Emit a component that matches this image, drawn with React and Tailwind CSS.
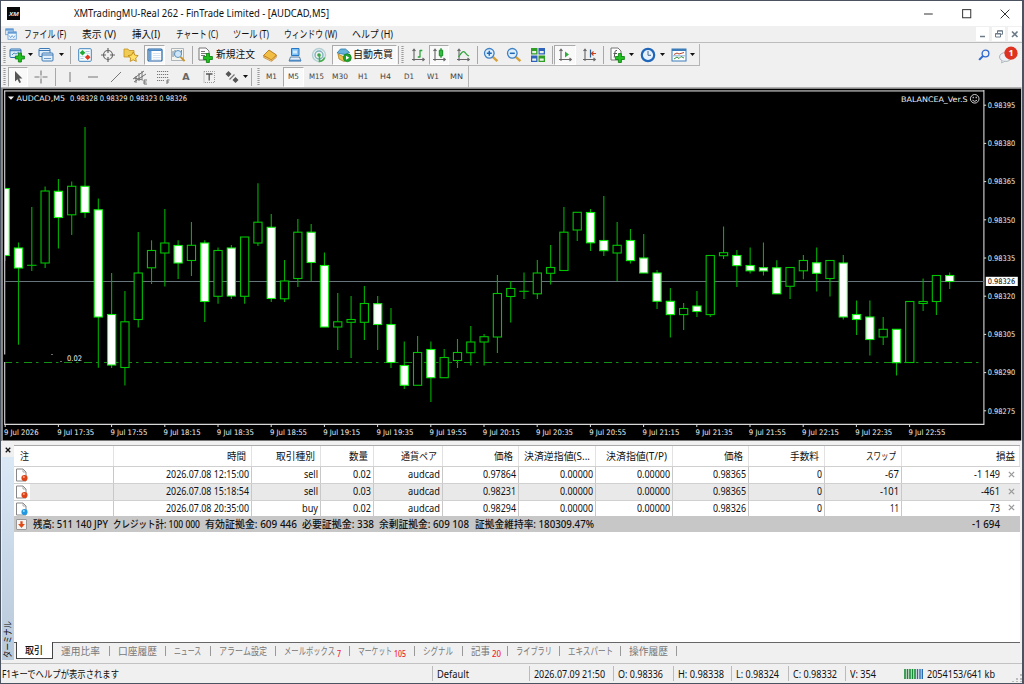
import { useLayoutEffect, useRef, useState } from "react";

const CJK = "font-['Noto_Sans','Noto_Sans_CJK_JP',sans-serif]";

/* Condenses its text horizontally so that it occupies exactly `w` pixels. */
function Fit({ w, className = "", children }) {
  const ref = useRef(null);
  const [scale, setScale] = useState(1);
  useLayoutEffect(() => {
    const natural = parseFloat(getComputedStyle(ref.current).width);
    if (natural > 0) setScale(w / natural);
  }, [w, children]);
  return (
    <span className={`inline-flex shrink-0 ${className}`} style={{ width: w }}>
      <span ref={ref} className="shrink-0 origin-left whitespace-nowrap" style={{ transform: `scaleX(${scale})` }}>
        {children}
      </span>
    </span>
  );
}

/* high, body top, body bottom, low, filled */
const CANDLES = [
  [188.5, 188.5, 255.5, 261, 1], [242.5, 248, 268, 344.7, 1], [207, 265.3, 265.3, 271, 0], [186.5, 191, 263, 268, 0],
  [179, 191.3, 217.5, 248.5, 1], [181.5, 186.3, 214.8, 235, 0], [127, 186.3, 212.5, 217.7, 1], [198.5, 209.8, 317, 367.7, 1],
  [273, 314.5, 365, 368, 1], [291, 321.8, 367.5, 385.5, 0], [232, 273, 319.5, 327.5, 0], [240.3, 250.5, 267.8, 284, 0],
  [209, 243, 253, 286.5, 0], [240.3, 245.5, 263, 279, 1], [222, 245.3, 260.5, 276, 0], [240.3, 243, 301.5, 322, 1],
  [247.5, 250.5, 296.3, 303.7, 0], [245, 248, 296, 299, 1], [237, 237, 296.3, 303.7, 0], [183.3, 222.2, 243, 246, 0],
  [214, 227.3, 298.5, 302, 1], [260, 281, 298.8, 302, 0], [219, 232.2, 278.5, 287, 0], [224, 232.2, 262.5, 281, 1],
  [252.5, 265.5, 327, 327, 1], [293, 321.8, 327, 350, 0], [296, 319.5, 322.3, 358, 0], [286, 303.5, 322.3, 340, 0],
  [296, 303.7, 324.5, 350, 1], [308, 324.5, 362.5, 368, 1], [341.5, 365.5, 385.3, 389, 1], [336, 352.5, 385.3, 385.3, 0],
  [341.5, 349.5, 377.7, 402, 1], [349, 357.5, 377.7, 377.7, 0], [339, 352.5, 360.5, 368, 0], [326, 342, 352.7, 365.5, 0],
  [334, 336.7, 342, 365.5, 0], [275, 293.5, 337, 353, 0], [281, 288.5, 296.5, 322.5, 0], [272.5, 291.3, 291.3, 299, 0],
  [260, 273, 293.8, 299, 0], [245, 267.5, 273.3, 284.5, 0], [207, 232.2, 270.5, 270.5, 0], [212.3, 212.3, 230, 241, 0],
  [209, 212.5, 242.8, 251, 1], [196, 240.5, 250.7, 256, 1], [222, 245.3, 253, 281, 0], [229, 240.5, 260.6, 263.5, 1],
  [234, 258, 273, 273, 1], [270, 273, 301.3, 309, 1], [288, 301.3, 314.6, 337.5, 1], [303, 308.5, 314.6, 330, 0],
  [291, 306, 311.5, 317, 1], [255.5, 255.5, 314.6, 317, 0], [226.5, 252.7, 255.7, 259, 0], [250, 255.5, 265.6, 287, 1],
  [247.5, 265.5, 270.8, 273.5, 1], [242.5, 267.7, 271, 275.5, 1], [260.3, 267.8, 293.8, 293.8, 1], [267.5, 267.5, 286.3, 299, 0],
  [255, 260.5, 270.8, 279.3, 0], [247.5, 262.8, 273.3, 291.5, 1], [260.5, 260.5, 278.5, 296.5, 0], [255, 263, 317, 319.5, 1],
  [300.5, 314.5, 319.5, 335, 1], [300.5, 317, 339.5, 355.5, 1], [317, 329.3, 337, 345, 0], [329.3, 329.3, 362.7, 375.5, 1],
  [301.5, 301.5, 362.5, 362.5, 0], [278.5, 301.5, 303.5, 311, 0], [275.5, 275.5, 301.5, 315, 0], [272.5, 275.5, 281.5, 289, 1],
];
const PRICES = ["0.98395", "0.98380", "0.98365", "0.98350", "0.98335", "0.98320", "0.98305", "0.98290", "0.98275"];
const TIMES = ["2026", "17:35", "17:55", "18:15", "18:35", "18:55", "19:15", "19:35", "19:55", "20:15", "20:35", "20:55", "21:15", "21:35", "21:55", "22:15", "22:35", "22:55"];

function ChartText({ x, y, w, fill = "#f0f0f0", children }) {
  return (
    <text x={x} y={y} textLength={w} lengthAdjust="spacingAndGlyphs" fill={fill} className="font-['DejaVu_Sans_Condensed','DejaVu_Sans',sans-serif] text-[7.6px]">
      {children}
    </text>
  );
}

function Chart() {
  return (
    <svg viewBox="1 87 1021 354" className="block h-[354px] w-[1021px] shrink-0">
      <rect x="1" y="87" width="1021" height="354" fill="#f0f0f0" />
      <rect x="1" y="87.4" width="1020.5" height="1.3" fill="#8a8a8a" />
      <rect x="1" y="88" width="1.2" height="353" fill="#8a8a8a" />
      <rect x="2.6" y="88.8" width="1018.6" height="351.7" fill="#000" />
      <rect x="4" y="90" width="980" height="1.8" fill="#858585" />
      <path d="M4.7 91V354.5M4.7 362V424.4H983.9M983.9 90V425" fill="none" stroke="#d8d8d8" strokeWidth="1.1" />
      <path d="M5 281.5H984" stroke="#66747c" strokeWidth="1" />
      <path d="M5 362.5H984" stroke="#159015" strokeWidth="1" strokeDasharray="8 4 2.5 5.5" strokeDashoffset="1" />
      <clipPath id="plot"><rect x="5" y="92" width="978" height="332" /></clipPath>
      <g clipPath="url(#plot)">
        {CANDLES.map(([h, t, b, l, f], i) => {
          const x = 5.2 + i * 13.303;
          return (
            <g key={i} stroke={f ? "#10f010" : "#00c400"} fill={f ? "#fff" : "#000"} strokeWidth="1.1">
              <path d={`M${x} ${h}V${l}`} stroke="#00b000" />
              {t === b ? <path d={`M${x - 4.7} ${t}h9.4`} /> : <rect x={x - 4.1} y={t} width="8.2" height={b - t} />}
            </g>
          );
        })}
      </g>
      <path d="M8 96.5h6l-3 3.2z" fill="#f2f2f2" />
      <ChartText x="16.5" y="100.6" w="48.5">AUDCAD,M5</ChartText>
      <ChartText x="70" y="100.6" w="117">0.98328 0.98329 0.98323 0.98326</ChartText>
      <ChartText x="901" y="101.6" w="66.5">BALANCEA_Ver.S</ChartText>
      <g fill="none" stroke="#e5e5e5" strokeWidth=".9">
        <circle cx="974.7" cy="98.8" r="4.3" />
        <path d="M972.4 100.2q2.3 2.3 4.6 0" />
        <path d="M973.2 96.7v1.6M976.2 96.7v1.6" strokeWidth="1.1" />
      </g>
      <ChartText x="67" y="360.6" w="15">0.02</ChartText>
      <path d="M51 354.5h2M60 361.5h2" stroke="#999" strokeWidth=".7" />
      {PRICES.map((p, i) => (
        <g key={p}>
          <path d={`M984 ${105.2 + i * 38.2}h2.2`} stroke="#ddd" />
          <ChartText x="987.8" y={108 + i * 38.2} w="27.4">{p}</ChartText>
        </g>
      ))}
      <rect x="985.8" y="276.8" width="32" height="9.2" fill="#fff" />
      <ChartText x="987.8" y="284.2" w="27.4" fill="#000">0.98326</ChartText>
      {TIMES.map((t, i) => (
        <g key={t}>
          <path d={`M${5.2 + i * 53.2} 424.5v2.5`} stroke="#ddd" />
          <ChartText x={4 + i * 53.2} y="434.6" w={i ? 37 : 34.5}>{`9 Jul ${t}`}</ChartText>
        </g>
      ))}
    </svg>
  );
}

/* ---------- toolbar pieces ---------- */
const Icon = ({ children, className = "h-4 w-4" }) => (
  <svg viewBox="0 0 16 16" fill="none" className={`block shrink-0 ${className}`}>{children}</svg>
);
const Cell = ({ className, on, children }) => (
  <div className={`flex h-[20px] shrink-0 items-center justify-center ${on ? "border border-[#aaa] border-r-white border-b-white bg-[#f9f9f9]" : ""} ${className}`}>{children}</div>
);
const Caret = () => <svg viewBox="0 0 5 3" className="h-[3px] w-[5px] shrink-0"><path d="M0 0h5L2.5 3z" fill="#111" /></svg>;
const Sep = ({ className = "w-[9px]" }) => <div className={`flex shrink-0 justify-center ${className}`}><div className="h-[18px] w-px bg-[#a8a8a8]" /></div>;
const Handle = () => (
  <div className="flex w-[7px] shrink-0 justify-center">
    <svg viewBox="0 0 3 18" className="h-[18px] w-[3px]"><path d="M1.5 0V18" stroke="#9a9a9a" strokeWidth="2.2" strokeDasharray="1 1" /></svg>
  </div>
);
const Plus = ({ x = 6, y = 6 }) => <path transform={`translate(${x} ${y})`} d="M3.4.5h3v3h3v3h-3v3h-3v-3h-3v-3h3z" fill="#21c021" stroke="#087a08" strokeWidth=".8" />;
const Axes = () => <path d="M4 2.500v11.500M2 12.500h12M2.500 4L4 2.200 5.500 4M12.500 11l1.800 1.500-1.800 1.500" stroke="#666" strokeWidth="1.100" />;

const NewChart = () => <Icon><rect x="1" y="2" width="11" height="8.5" rx="1" fill="#dcebf8" stroke="#2f73b4" /><path d="M1 3.7h11" stroke="#2f73b4" /><path d="M3 8l2-2 2 1 3-2" stroke="#4e8fca" /><Plus x={6} y={5.5} /></Icon>;
const Profiles = () => <Icon><rect x="1" y="1.5" width="11" height="8" rx="1" fill="#e3effa" stroke="#3d7ab5" /><rect x="4" y="6" width="11" height="8" rx="1" fill="#e3effa" stroke="#3d7ab5" /><path d="M1 3.5h11M4 8h11" stroke="#3d7ab5" /><path d="M6 11.5h7" stroke="#6b9bc8" /></Icon>;
const Market = () => <Icon><rect x="1.7" y="1.7" width="12.6" height="12.6" rx="1" fill="#f8fcff" stroke="#4285bd" /><path d="M3 6.5h10M3 9.5h10" stroke="#bcd4ea" strokeWidth=".6" /><path d="M5.500 3l2.800 2.800-2.800 2.800-2.800-2.800z" fill="#1eab35" /><path d="M10.700 7.400l2.800 2.800-2.800 2.800-2.800-2.800z" fill="#e13a1d" /><path d="M8.500 4.500h4M3.500 11.500h3" stroke="#9bb9d3" strokeWidth=".8" /></Icon>;
const Target = () => <Icon><circle cx="8" cy="8" r="4.5" stroke="#666" strokeWidth="1.2" /><path d="M8 1v5M8 10v5M1 8h5M10 8h5" stroke="#666" strokeWidth="1.2" /></Icon>;
const StarFolder = () => <Icon><path d="M1 2h4l1 1.5h5V10H1z" fill="#f0cb56" stroke="#c39220" strokeWidth=".8" /><path d="M10.2 5l1.6 3.1 3.4.5-2.5 2.4.6 3.4-3.1-1.6-3.1 1.6.6-3.4L5.200 8.600l3.400-.5z" fill="#ffe066" stroke="#b9820e" strokeWidth=".8" /></Icon>;
const Terminal = () => <Icon><rect x="1" y="2" width="14" height="12" rx="1" fill="#fff" stroke="#2461a0" strokeWidth="1.2" /><path d="M1.500 3.200h13" stroke="#3f82c4" strokeWidth="1.500" /><path d="M2 4h2.500v9.500H2z" fill="#6aa2da" /><path d="M6 6.500h7.500M6 8.500h7.500M6 10.500h7.500M6 12.300h7.500" stroke="#c5d8ec" strokeWidth=".7" /></Icon>;
const Tester = () => <Icon><path d="M1.500 1.500h12v12h-12z" fill="#f4f4ee" stroke="#9aa5ad" strokeWidth=".8" /><path d="M3 4v6M5 3v6M11.500 3v5" stroke="#5c6a73" strokeWidth=".8" /><circle cx="8" cy="7" r="3.500" fill="#cfe6f8" stroke="#5d94bf" /><path d="M10.600 9.800l4 4.400" stroke="#c9952c" strokeWidth="2" /></Icon>;
const OrderDoc = () => <Icon><path d="M2 1h7l3 3v9H2z" fill="#fff" stroke="#777" /><path d="M4 4.500h4M4 6.500h6M4 8.500h4" stroke="#777" /><Plus x={6} y={6} /></Icon>;
const Book = () => <Icon><path d="M1.500 8.500L7 3l7.500 5-5 5z" fill="#f2bd43" stroke="#a86a0d" strokeWidth=".8" /><path d="M1.500 8.500v2.200l8 4 5-4.200V8L9.500 13z" fill="#b9700f" /><path d="M2.200 10l7.300 3.800 4.500-4" stroke="#ffe8a8" strokeWidth=".8" /></Icon>;
const Server = () => <Icon><path d="M4.500 1.500h7.500v7H4.500z" fill="#7fc0f5" stroke="#2677c5" /><path d="M6 3.500h4v3H6z" fill="#d3ebff" /><path d="M2 14l1.500-4h9l1.500 4z" fill="#e4edf5" stroke="#5b83a9" /><path d="M2 13.500h12" stroke="#4d89c5" strokeWidth="1.600" /></Icon>;
const Signal = () => <Icon><circle cx="8" cy="8" r="6.500" stroke="#b4d0d4" strokeWidth="1.400" /><circle cx="8" cy="8" r="4" stroke="#7fb2c0" strokeWidth="1.400" /><circle cx="8" cy="8" r="1.800" fill="#37a447" /><path d="M8.500 8v6.500c3-.5 4.500-2 5-4" stroke="#42ad4b" strokeWidth="1.500" /></Icon>;
const Auto = () => <Icon><path d="M1 6l3.500-4h5l4 3.500-4.500 2z" fill="#68b2db" stroke="#277baa" strokeWidth=".8" /><path d="M2 7l6 3 5.500-3v4L8 14.500 3 12z" fill="#edc14b" stroke="#ae811c" strokeWidth=".8" /><circle cx="11.300" cy="10.800" r="4" fill="#1fa32d" stroke="#0c7918" strokeWidth=".6" /><path d="M10 8.800v4l3.300-2z" fill="#fff" /></Icon>;
const BarsI = () => <Icon><Axes /><path d="M10 3v7.500M10 3.500h2.300M7.800 10h2.200" stroke="#2ba43a" strokeWidth="1.300" /></Icon>;
const CandleI = () => <Icon><Axes /><path d="M10 1v10" stroke="#128a20" /><rect x="8.300" y="3" width="3.400" height="6" rx=".6" fill="#33bd3f" stroke="#128a20" /></Icon>;
const LineI = () => <Icon><Axes /><path d="M3.500 10C6 6 8 3.500 9.500 5s2.500 3.500 4.500 4" stroke="#31a33d" strokeWidth="1.200" /></Icon>;
const ZoomI = ({ plus }) => <Icon><path d="M9.800 9.800l4.600 4.400" stroke="#d6a238" strokeWidth="2.500" /><circle cx="6.300" cy="6.300" r="4.800" fill="#dff0fd" stroke="#3d80c4" strokeWidth="1.300" /><path d={plus ? "M3.800 6.300h5M6.300 3.800v5" : "M3.800 6.300h5"} stroke="#1f68b8" strokeWidth="1.500" /></Icon>;
const Tile = () => <Icon><rect x="1" y="1" width="6.500" height="6.500" fill="#2e9e24" /><rect x="8.500" y="1" width="6.500" height="6.500" fill="#2f62bb" /><rect x="1" y="8.500" width="6.500" height="6.500" fill="#2f62bb" /><rect x="8.500" y="8.500" width="6.500" height="6.500" fill="#2e9e24" /><path d="M2.200 4h4v2.200h-4zM9.700 4h4v2.200h-4zM2.200 11.500h4v2.200h-4zM9.700 11.500h4v2.200h-4z" fill="#e9f4e6" /></Icon>;
const ScrollI = () => <Icon><Axes /><path d="M8 4.500v6l4-3z" fill="#2fae3c" /></Icon>;
const ShiftI = () => <Icon><Axes /><path d="M9.500 2.500v8" stroke="#2a5f95" strokeWidth="1.200" /><path d="M15 6.500h-4.500M12.500 4.500l-2 2 2 2" stroke="#c7421c" strokeWidth="1.200" /></Icon>;
const Indic = () => <Icon><path d="M2 1h7l3 3v9H2z" fill="#fff" stroke="#777" /><path d="M8 3.500c-2-.5-2 1-2.200 3l-.6 4M4.500 6.500H8" stroke="#555" /><Plus x={6} y={6} /></Icon>;
const Clock = () => <Icon><circle cx="8" cy="8" r="6.200" fill="#e6f1fd" stroke="#1f65b8" strokeWidth="2.200" /><path d="M8 4v4.300h3" stroke="#466b8f" /></Icon>;
const Template = () => <Icon><rect x="1" y="2" width="14" height="12" fill="#fff" stroke="#3b7bb9" /><path d="M1 3h14" stroke="#3b7bb9" strokeWidth="2" /><path d="M3 7.500l3-1.500 2 1 5-1.500" stroke="#b2422b" /><path d="M3 12l3-2 2 1.500 2-2 3 1.500" stroke="#34943e" /><path d="M2 8.800h12" stroke="#3b7bb9" strokeWidth=".6" /></Icon>;

const Cursor = () => <Icon><path d="M5 2v10.500l2.500-2.300 1.800 3.900 1.700-.8-1.800-3.700h3.200z" fill="#555" /></Icon>;
const Cross = () => <Icon><path d="M8 1.500v5M8 9.500v5M1.500 8h5M9.500 8h5M7.500 8h1" stroke="#777" strokeWidth="1.100" /></Icon>;
const Channel = () => <Icon><path d="M1 10l11-8M2 13L14 5M4 14V7M7 12V4M10 10V2M2 9l9 2" stroke="#666" strokeWidth=".9" /><path d="M15 11h-3v4h3M12 13h2.500" stroke="#555" strokeWidth=".8" /></Icon>;
const Fibo = () => <Icon><path d="M2 2.500h12M2 5.500h12M2 8.500h12M2 11.500h7" stroke="#777" strokeDasharray="1.200 .8" /><path d="M14.500 11H12v4M12 13h2" stroke="#555" strokeWidth=".8" /></Icon>;
const TextBox = () => <Icon><rect x="3" y="2.500" width="10.500" height="11" stroke="#999" strokeDasharray="1 1" /><path d="M5 5h6.500M8.200 5v6.500" stroke="#555" strokeWidth="1.300" /></Icon>;
const Arrows = () => <Icon><path d="M4.500 2l3 3-3 3-3-3zM11.500 8l3 3-3 3-3-3z" fill="#555" /><path d="M5.500 10.500L10.500 5.500" stroke="#777" strokeWidth="1.200" /></Icon>;

function TF({ w, className, on, children }) {
  return <Cell className={className} on={on}><Fit w={w} className="font-['DejaVu_Sans_Condensed'] text-[7.5px] text-[#444]">{children}</Fit></Cell>;
}

const MENUS = [["ファイル (F)", 42, "w-[58px]"], ["表示 (V)", 34, "w-[50px]"], ["挿入(I)", 28, "w-[44px]"], ["チャート (C)", 42, "w-[57px]"], ["ツール (T)", 36, "w-[51px]"], ["ウィンドウ (W)", 53, "w-[68px]"], ["ヘルプ (H)", 41, "w-[50px]"]];

/* ---------- trade table ---------- */
const COLS = "grid grid-cols-[100px_138px_69px_53px_69px_76px_77px_77px_76px_76px_77px_118px]";
const HEADS = [["時間", 19], ["取引種別", 39], ["数量", 19], ["通貨ペア", 36], ["価格", 19], ["決済逆指値(S...", 66], ["決済指値(T/P)", 61], ["価格", 19], ["手数料", 29], ["スワップ", 30], ["損益", 19]];
const ROWS = [
  { buy: false, c: [["2026.07.08 12:15:00", 83], ["sell", 14], ["0.02", 18], ["audcad", 32], ["0.97864", 33], ["0.00000", 33], ["0.00000", 33], ["0.98365", 33], ["0", 5], ["-67", 14], ["-1 149", 26]] },
  { buy: false, c: [["2026.07.08 15:18:54", 83], ["sell", 14], ["0.03", 18], ["audcad", 32], ["0.98231", 33], ["0.00000", 33], ["0.00000", 33], ["0.98365", 33], ["0", 5], ["-101", 19], ["-461", 19]] },
  { buy: true, c: [["2026.07.08 20:35:00", 83], ["buy", 16], ["0.02", 18], ["audcad", 32], ["0.98294", 33], ["0.00000", 33], ["0.00000", 33], ["0.98326", 33], ["0", 5], ["11", 9], ["73", 10]] },
];
const SUMMARY = [["残高: 511 140 JPY", 75, "w-[80px]"], ["クレジット計: 100 000", 87, "w-[92px]"], ["有効証拠金: 609 446", 92, "w-[97px]"], ["必要証拠金: 338", 72, "w-[77px]"], ["余剰証拠金: 609 108", 90, "w-[96px]"], ["証拠金維持率: 180309.47%", 119, "w-[120px]"]];
const TABS = [["運用比率", 39, "w-[48px]"], ["口座履歴", 39, "w-[47px]"], ["ニュース", 27, "w-[35.5px]"], ["アラーム設定", 48, "w-[56px]"], ["メールボックス", 51, "w-[65px]", "7", 4], ["マーケット", 34, "w-[56px]", "105", 12], ["シグナル", 30, "w-[39.5px]"], ["記事", 19, "w-[36px]", "20", 9], ["ライブラリ", 36, "w-[43px]"], ["エキスパート", 45, "w-[52px]"], ["操作履歴", 39, "w-[47px]"]];
const STATUS = [["Default", 32, "w-[97px]"], ["2026.07.09 21:50", 71, "w-[84px]"], ["O: 0.98336", 45, "w-[60px]"], ["H: 0.98338", 46, "w-[58px]"], ["L: 0.98324", 43, "w-[57px]"], ["C: 0.98332", 44, "w-[57px]"], ["V: 354", 26, "w-[55px]"]];

const RowIcon = ({ buy }) => (
  <svg viewBox="0 0 14 14" className="h-[14px] w-[14px]">
    <path d="M1.500 1h6.500l3 3v9H1.500z" fill="#fff" stroke="#888" />
    <path d="M8 1v3h3" fill="none" stroke="#999" strokeWidth=".8" />
    <circle cx="9.500" cy="10" r="3.100" fill={buy ? "#2298e0" : "#dc4319"} />
    <circle cx="8.800" cy="9.100" r="1" fill={buy ? "#9fdcff" : "#ffa98a"} />
  </svg>
);

export default function App() {
  return (
    <div className={`flex h-[684px] w-[1024px] flex-col overflow-hidden border-t border-r-2 border-b border-l border-[#4b5260] bg-[#f0f0f0] text-[10px] leading-none text-[#111] ${CJK}`}>
      {/* title bar */}
      <div className="flex h-[25px] shrink-0 items-center bg-white pl-[6px]">
        <div className="flex h-[13px] w-[13px] shrink-0 items-center justify-center bg-[#080808]">
          <Fit w={10} className="text-[6px] font-bold text-[#ddd] italic">XM</Fit>
        </div>
        <Fit w={255} className="ml-[54px] text-[10.5px]">XMTradingMU-Real 262 - FinTrade Limited - [AUDCAD,M5]</Fit>
        <div className="ml-auto flex items-center gap-[28px] pr-[12px]">
          <Icon className="h-[10px] w-[10px]"><path d="M0 8h14" stroke="#333" strokeWidth="1.600" /></Icon>
          <Icon className="h-[10px] w-[10px]"><rect x="1" y="1" width="13" height="13" stroke="#333" strokeWidth="1.600" /></Icon>
          <Icon className="h-[10px] w-[10px]"><path d="M1 1l14 14M15 1L1 15" stroke="#333" strokeWidth="1.600" /></Icon>
        </div>
      </div>

      {/* menu bar */}
      <div className="flex h-[17px] shrink-0 items-center border-b border-[#bcbcbc]">
        <div className="flex w-[23px] shrink-0 pl-[4px]">
          <Icon className="h-[12px] w-[12px]"><rect x="1" y="1" width="10" height="8" fill="#eff7ff" stroke="#5592ce" /><path d="M1 2.500h10" stroke="#5592ce" strokeWidth="2" /><rect x="4" y="5" width="11" height="10" fill="#eff7ff" stroke="#5592ce" /><path d="M4 6.500h11" stroke="#5592ce" strokeWidth="2" /><path d="M5.500 10l2 3 2-3 2 3 2-3" stroke="#5592ce" /></Icon>
        </div>
        {MENUS.map(([t, w, cls]) => <div key={t} className={`flex shrink-0 ${cls}`}><Fit w={w} className="text-[10.5px]">{t}</Fit></div>)}
        <div className="ml-auto flex gap-[3px] pr-px">
          <div className="flex h-[14px] w-[13px] items-center justify-center bg-white"><Icon className="h-2 w-2"><path d="M2 13h10" stroke="#6c7b88" strokeWidth="3" /></Icon></div>
          <div className="flex h-[14px] w-[13px] items-center justify-center bg-white"><Icon className="h-2 w-2"><path d="M5 6V1.500h10v7h-4M1 7h10v7H1zM5 2h10M1 8h10" stroke="#6c7b88" strokeWidth="2" /></Icon></div>
          <div className="flex h-[14px] w-[13px] items-center justify-center bg-white"><Icon className="h-2 w-2"><path d="M2 3l11 11M13 3L2 14" stroke="#6c7b88" strokeWidth="3.200" /></Icon></div>
        </div>
      </div>

      {/* standard toolbar */}
      <div className="flex h-[23px] shrink-0 items-center justify-between pt-px">
        <div className="flex h-[22px] items-center border-r border-b border-[#b5b5b5]">
          <Handle />
          <Cell className="w-[17px]"><NewChart /></Cell>
          <Cell className="w-[10px]"><Caret /></Cell>
          <Cell className="w-[22px]"><Profiles /></Cell>
          <Cell className="w-[8px]"><Caret /></Cell>
          <Sep className="w-[10px]" />
          <Cell className="w-[19px]"><Market /></Cell>
          <Cell className="w-[28px]"><Target /></Cell>
          <Cell className="w-[22px] pr-[5px]"><StarFolder /></Cell>
          <Cell className="w-[21px]" on><Terminal /></Cell>
          <Cell className="w-[25px]"><Tester /></Cell>
          <Sep className="w-[4px]" />
          <Cell className="w-[22px]"><OrderDoc /></Cell>
          <Cell className="w-[39px]"><Fit w={39} className="text-[10.500px]">新規注文</Fit></Cell>
          <Cell className="w-[30px]"><Book /></Cell>
          <Cell className="w-[20px]"><Server /></Cell>
          <Cell className="w-[27px]"><Signal /></Cell>
          <Cell className="w-[65px]" on><Auto /><Fit w={40} className="ml-px text-[10.500px]">自動売買</Fit></Cell>
          <Sep className="w-[2px]" />
          <Handle />
          <Cell className="w-[23px]"><BarsI /></Cell>
          <Cell className="w-[20px]" on><CandleI /></Cell>
          <Cell className="w-[27px]"><LineI /></Cell>
          <Sep className="w-[3px]" />
          <Cell className="w-[24px]"><ZoomI plus /></Cell>
          <Cell className="w-[22px]"><ZoomI /></Cell>
          <Cell className="w-[25px]"><Tile /></Cell>
          <Sep className="w-[4px]" />
          <Cell className="w-[22px]" on><ScrollI /></Cell>
          <Cell className="w-[26px]"><ShiftI /></Cell>
          <Sep className="w-[3px]" />
          <Cell className="w-[24px]"><Indic /></Cell>
          <Cell className="w-[4px]"><Caret /></Cell>
          <Cell className="w-[27px] pl-[2px]"><Clock /></Cell>
          <Cell className="w-[4px]"><Caret /></Cell>
          <Cell className="w-[26px] pl-[3px]"><Template /></Cell>
          <Cell className="mr-[4px] w-[5px]"><Caret /></Cell>
        </div>
        <div className="flex items-center gap-[6px] pr-[4px]">
          <Icon className="mr-[2px] h-[12px] w-[12px]"><circle cx="10" cy="6" r="4.500" stroke="#2f69cf" strokeWidth="1.800" /><path d="M6.500 9.500L1.500 14.500" stroke="#2f69cf" strokeWidth="2.800" /></Icon>
          <svg viewBox="0 0 20 18" className="h-[18px] w-[20px]">
            <ellipse cx="7.500" cy="11" rx="6" ry="4.500" fill="#eef1f5" stroke="#adb4bb" /><path d="M4 14l-.5 3 4-2" fill="#dfe3e8" stroke="#adb4bb" strokeWidth=".8" />
            <circle cx="13" cy="7.200" r="6.600" fill="#de3320" />
            <text x="13" y="10.300" textAnchor="middle" fill="#fff" className="text-[9px] font-bold">1</text>
          </svg>
        </div>
      </div>

      {/* drawing and period toolbar */}
      <div className="flex h-[21px] shrink-0 items-center">
        <div className="flex h-[21px] items-center border-r border-[#b5b5b5]">
          <Handle />
          <Cell className="w-[20px]" on><Cursor /></Cell>
          <Cell className="w-[25px]"><Cross /></Cell>
          <Sep className="w-[4px]" />
          <Cell className="w-[25px]"><Icon><path d="M8 3v10" stroke="#777" /></Icon></Cell>
          <Cell className="w-[22px]"><Icon><path d="M3 8h10" stroke="#777" /></Icon></Cell>
          <Cell className="w-[24px]"><Icon><path d="M3 13L13 3" stroke="#777" /></Icon></Cell>
          <Cell className="w-[23px]"><Channel /></Cell>
          <Cell className="w-[24px]"><Fibo /></Cell>
          <Cell className="w-[22px] font-['DejaVu_Sans'] text-[9.500px] font-bold text-[#666]">A</Cell>
          <Cell className="w-[23px]"><TextBox /></Cell>
          <Cell className="w-[24px]"><Arrows /></Cell>
          <Cell className="w-[3px]"><Caret /></Cell>
          <Sep className="w-[8px]" />
          <Handle />
          <TF w={11} className="w-[19px]">M1</TF>
          <TF w={11} className="ml-[2px] w-[21px]" on>M5</TF>
          <TF w={15} className="w-[24px]">M15</TF>
          <TF w={16} className="w-[23px]">M30</TF>
          <TF w={10} className="w-[23px]">H1</TF>
          <TF w={11} className="w-[23px]">H4</TF>
          <TF w={10} className="w-[24px]">D1</TF>
          <TF w={12} className="w-[24px]">W1</TF>
          <TF w={13} className="w-[23px]">MN</TF>
        </div>
      </div>

      <Chart />

      {/* terminal */}
      <div className="flex h-[222px] shrink-0">
        <div className="flex w-[13px] shrink-0 flex-col items-center">
          <div className="flex h-[16px] items-center pt-[2px]"><Icon className="h-[6px] w-[6px]"><path d="M2 2l12 12M14 2L2 14" stroke="#111" strokeWidth="3.500" /></Icon></div>
          <div className="flex h-[203px] w-[12px] items-end justify-center bg-linear-to-b from-[#dbe8f6] to-[#b7c8da] pb-[2px]">
            <div className="flex h-[37px] w-[10px] items-end justify-center">
              <div className="flex h-[10px] w-[10px] origin-center -rotate-90 items-center"><Fit w={37} className="text-[9.500px]">ターミナル</Fit></div>
            </div>
          </div>
        </div>
        <div className="flex w-[1006px] shrink-0 flex-col">
          <div className="mt-[4px] flex h-[197px] shrink-0 flex-col border-t border-[#aaa] bg-white">
            <div className={`${COLS} h-[20px] shrink-0`}>
              <div className="flex items-center border-r border-[#e2e2e2] pl-[6px]"><Fit w={9}>注</Fit></div>
              {HEADS.map(([t, w], i) => (
                <div key={i} className={`flex items-center justify-end border-r border-[#e2e2e2] ${i === 10 ? "pr-[4px]" : "pr-[5px]"}`}><Fit w={w}>{t}</Fit></div>
              ))}
            </div>
            {ROWS.map((r, ri) => (
              <div key={ri} className={`${COLS} shrink-0 border-t border-[#d0d0d0] ${ri === 1 ? "h-[17px] bg-[#e9e9e9]" : ri === 0 ? "h-[17px]" : "h-[16px]"}`}>
                <div className="flex items-center border-r border-[#c8c8c8]">
                  <div className="flex h-full w-[16px] items-center bg-white pl-px"><RowIcon buy={r.buy} /></div>
                </div>
                {r.c.map(([t, w], i) => (
                  <div key={i} className={`flex items-center justify-end pb-[2px] ${i === 10 ? "pr-[5px]" : "border-r border-[#c8c8c8] pr-[2px]"}`}>
                    <Fit w={w}>{t}</Fit>
                    {i === 10 && <Icon className="ml-[8px] h-[7px] w-[7px]"><path d="M2 2l12 12M14 2L2 14" stroke="#999" strokeWidth="3" /></Icon>}
                  </div>
                ))}
              </div>
            ))}
            <div className="flex h-[16px] shrink-0 items-center bg-[#c7c7c7] pl-[2px] font-medium">
              <div className="mr-[6px] flex h-[11px] w-[11px] shrink-0 items-center justify-center rounded-[1px] border border-[#999] bg-[#f5f5f5]">
                <Icon className="h-[9px] w-[9px]"><path d="M6 2h4v5h4l-6 7-6-7h4z" fill="#df4a15" /></Icon>
              </div>
              {SUMMARY.map(([t, w, cls]) => <div key={t} className={`flex shrink-0 ${cls}`}><Fit w={w}>{t}</Fit></div>)}
              <Fit w={28} className="mr-[20px] ml-auto">-1 694</Fit>
            </div>
          </div>
          {/* tabs */}
          <div className="flex h-[17px] shrink-0 items-start">
            <div className="h-px w-[2px] bg-[#555]" />
            <div className="flex h-[17px] w-[37px] shrink-0 items-center justify-center border-r border-b border-l border-[#444] bg-white pr-[2px]"><Fit w={18} className="font-medium">取引</Fit></div>
            <div className="flex h-[17px] grow items-center border-t border-[#666] pl-[8px] text-[#777]">
              {TABS.map(([t, w, cls, n, nw]) => (
                <div key={t} className="flex shrink-0">
                  <div className={`flex shrink-0 ${cls}`}>
                    <Fit w={w}>{t}</Fit>
                    {n && <Fit w={nw} className="ml-[2px] translate-y-[4px] text-[8px] font-medium text-[#f0222e]">{n}</Fit>}
                  </div>
                  <div className="mr-[8px] h-[10px] w-px bg-[#999]" />
                </div>
              ))}
            </div>
          </div>
        </div>
      </div>

      {/* status bar */}
      <div className="flex h-[20px] shrink-0 items-center border-t border-[#c2c2c2]">
        <div className="flex w-[431px] shrink-0 pl-px"><Fit w={117}>F1キーでヘルプが表示されます</Fit></div>
        {STATUS.map(([t, w, cls]) => (
          <div key={t} className={`flex h-[15px] shrink-0 items-center border-l border-[#bbb] pl-[4px] ${cls}`}><Fit w={w}>{t}</Fit></div>
        ))}
        <svg viewBox="0 0 19 12" className="mr-[4px] ml-[4px] h-[12px] w-[19px] shrink-0">
          <path d="M1 1v10M3.500 1v10M6 1v10M8.500 1v10M11 1v10" stroke="#168a35" strokeWidth="1.600" />
          <path d="M13.500 1v10M16 1v10M18.300 1v10" stroke="#276bb0" strokeWidth="1.400" />
        </svg>
        <Fit w={68}>2054153/641 kb</Fit>
        <svg viewBox="0 0 10 10" className="mt-[8px] ml-auto h-[10px] w-[10px]"><path d="M9 1v2M9 5v2M5 5v2M9 9V8M5 9V8M1 9V8" stroke="#aaa" strokeWidth="1.500" /></svg>
      </div>
    </div>
  );
}
